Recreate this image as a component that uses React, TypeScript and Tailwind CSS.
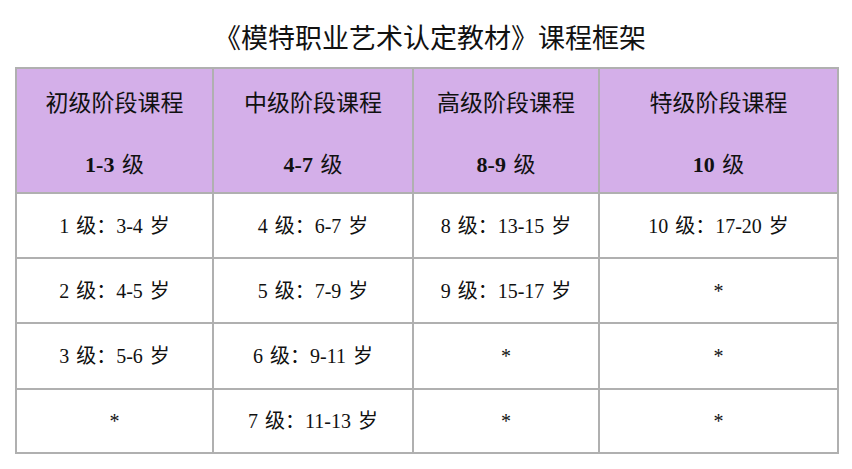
import React from 'react';

const heads = [
    { name: '初级阶段课程', lv: '1-3' },
    { name: '中级阶段课程', lv: '4-7' },
    { name: '高级阶段课程', lv: '8-9' },
    { name: '特级阶段课程', lv: '10' },
];

const rows = [
    { h: 'h-[63px]', cells: [['1', '3-4'], ['4', '6-7'], ['8', '13-15'], ['10', '17-20']] },
    { h: 'h-[63px]', cells: [['2', '4-5'], ['5', '7-9'], ['9', '15-17'], null] },
    { h: 'h-[64px]', cells: [['3', '5-6'], ['6', '9-11'], null, null] },
    { h: 'h-[62px]', cells: [null, ['7', '11-13'], null, null] },
];

export default function App() {
    return (
        <div className="w-[852px] h-[469px] bg-white text-[#111] font-['Liberation_Serif','Noto_Sans_CJK_SC',serif]">
            {/* Title */}
            <div className="pt-[20px] h-[67px] text-center text-[27px] leading-[34px] font-['Noto_Sans_CJK_SC',sans-serif] pl-[8px]">
                《模特职业艺术认定教材》课程框架
            </div>

            {/* Table */}
            <div className="ml-[15px] w-[824px] grid grid-cols-[195px_198px_184px_237px] gap-[2px] p-[2px] bg-[#b0b0b0]">
                {heads.map((c) => (
                    <div
                        key={c.name}
                        className="h-[123px] bg-[#d4afe9] flex flex-col items-center justify-center gap-[32px] pt-[5px]"
                    >
                        <div className="text-[23px] leading-[32px] font-['Noto_Sans_CJK_SC',sans-serif]">{c.name}</div>
                        <div className="text-[22px] leading-[32px] [word-spacing:2px]">
                            <span className="font-bold">{c.lv}</span> 级
                        </div>
                    </div>
                ))}
                {rows.map((r, ri) =>
                    r.cells.map((c, ci) => (
                        <div
                            key={ri + '-' + ci}
                            className={`${r.h} bg-white flex items-center justify-center text-[20px] leading-none [word-spacing:2px]`}
                        >
                            {c ? `${c[0]} 级：${c[1]} 岁` : '*'}
                        </div>
                    ))
                )}
            </div>
        </div>
    );
}
